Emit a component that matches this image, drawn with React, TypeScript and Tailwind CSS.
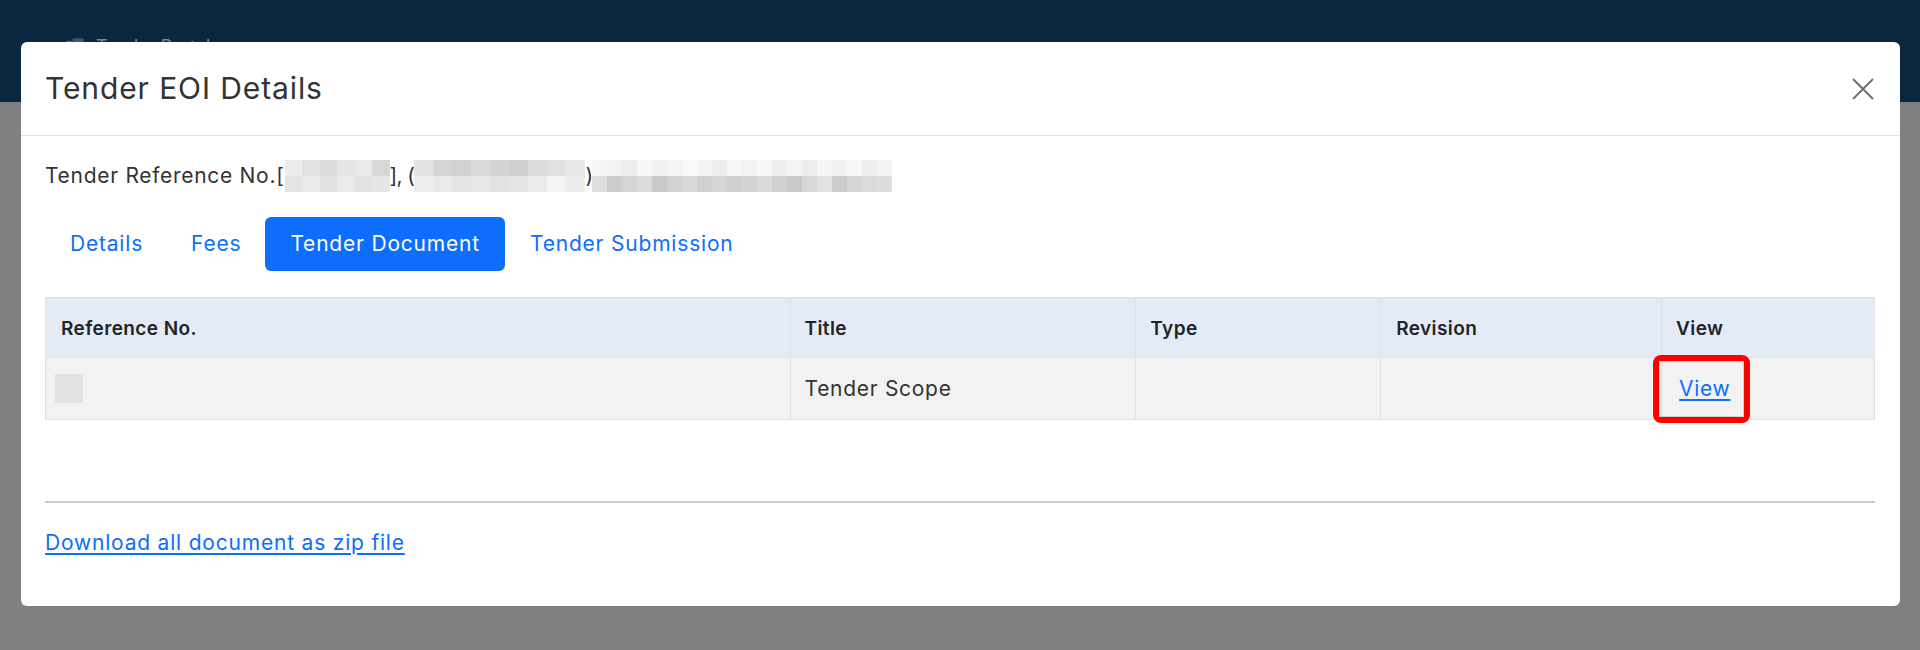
import React from "react";

const shades1 = [
  ["bg-[#ececec]", "bg-[#e2e2e2]", "bg-[#dcdcdc]", "bg-[#e6e6e6]", "bg-[#e9e9e9]", "bg-[#d7d7d7]"],
  ["bg-[#e4e4e4]", "bg-[#e9e9e9]", "bg-[#e1e1e1]", "bg-[#ebebeb]", "bg-[#e3e3e3]", "bg-[#e6e6e6]"],
];
const shades2 = [
  ["bg-[#e3e3e3]", "bg-[#d6d6d6]", "bg-[#d2d2d2]", "bg-[#dadada]", "bg-[#d4d4d4]", "bg-[#cfcfcf]", "bg-[#dddddd]", "bg-[#e0e0e0]", "bg-[#e8e8e8]"],
  ["bg-[#eeeeee]", "bg-[#e9e9e9]", "bg-[#e4e4e4]", "bg-[#e7e7e7]", "bg-[#e2e2e2]", "bg-[#e6e6e6]", "bg-[#ebebeb]", "bg-[#f4f4f4]", "bg-[#ececec]"],
];
const shades3 = [
  ["bg-[#f6f6f6]", "bg-[#f2f2f2]", "bg-[#eeeeee]", "bg-[#f7f7f7]", "bg-[#f1f1f1]", "bg-[#f5f5f5]", "bg-[#f9f9f9]", "bg-[#f3f3f3]", "bg-[#eeeeee]", "bg-[#f6f6f6]", "bg-[#f2f2f2]", "bg-[#f8f8f8]", "bg-[#efefef]", "bg-[#f4f4f4]", "bg-[#ededed]", "bg-[#f5f5f5]", "bg-[#f1f1f1]", "bg-[#f7f7f7]", "bg-[#eeeeee]", "bg-[#f3f3f3]"],
  ["bg-[#dedede]", "bg-[#cdcdcd]", "bg-[#d5d5d5]", "bg-[#dcdcdc]", "bg-[#c9c9c9]", "bg-[#d3d3d3]", "bg-[#d8d8d8]", "bg-[#d0d0d0]", "bg-[#d6d6d6]", "bg-[#cfcfcf]", "bg-[#d4d4d4]", "bg-[#dadada]", "bg-[#d1d1d1]", "bg-[#cbcbcb]", "bg-[#d7d7d7]", "bg-[#e2e2e2]", "bg-[#cccccc]", "bg-[#d5d5d5]", "bg-[#dbdbdb]", "bg-[#dddddd]"],
];

function Mosaic({ rows, tile }: { rows: string[][]; tile: string }) {
  return (
    <span className="inline-flex flex-col align-middle">
      {rows.map((r, i) => (
        <span key={i} className="flex">
          {r.map((c, j) => (
            <span key={j} className={`${c} ${tile}`} />
          ))}
        </span>
      ))}
    </span>
  );
}

export default function App() {
  return (
    <div className="relative h-[650px] w-[1920px] overflow-hidden bg-[#808080] font-['Inter',sans-serif]">
      <header className="flex h-[102px] items-start bg-[#0b2740] pl-[64px] pt-[33px] text-[18px] text-[#7d8894]">
        <div className="flex items-center gap-[8px]">
          <svg width="24" height="20" viewBox="0 0 24 20">
            <rect x="2" y="4" width="12" height="14" fill="#8c96a0" stroke="#2b3440" />
            <rect x="8" y="1" width="12" height="14" fill="#3c5a82" stroke="#1b2530" />
          </svg>
          <span>Tender Portal</span>
        </div>
      </header>

      <div className="absolute left-[21px] top-[42px] flex h-[564px] w-[1879px] flex-col rounded-[6px] bg-white">
        <div className="flex h-[94px] shrink-0 items-center justify-between border-b border-[#dee2e6] px-[24px]">
          <h5 className="text-[30px] font-normal tracking-[0.9px] text-[#333333]">Tender EOI Details</h5>
          <button className="mr-[1px] flex h-[24px] w-[24px] items-center justify-center">
            <svg width="22" height="22" viewBox="0 0 22 22">
              <path d="M1 1L21 21M21 1L1 21" stroke="#6b6b6b" strokeWidth="1.8" />
            </svg>
          </button>
        </div>

        <div className="flex flex-1 flex-col px-[24px] pt-[23px] tracking-[0.7px]">
          <div className="flex h-[34px] items-center text-[21px] leading-[30px] text-[#333333]">
            <span>Tender Reference No.[</span>
            <Mosaic rows={shades1} tile="h-[16px] w-[17.5px]" />
            <span className="tracking-[-0.6px]">], (</span>
            <Mosaic rows={shades2} tile="h-[16px] w-[19px]" />
            <span className="tracking-[-1px]">)</span>
            <Mosaic rows={shades3} tile="h-[16px] w-[15px]" />
          </div>

          <nav className="mt-[24px] flex h-[54px] items-stretch text-[21px] tracking-[0.8px]">
            <a className="flex items-center px-[25px] text-[#0d6efd]">Details</a>
            <a className="flex items-center pl-[23px] pr-[24px] text-[#0d6efd]">Fees</a>
            <a className="flex items-center rounded-[6px] bg-[#0d6efd] px-[25px] text-white">Tender Document</a>
            <a className="flex items-center px-[25px] text-[#0d6efd]">Tender Submission</a>
          </nav>

          <table className="mt-[26px] w-[1830px] border-collapse text-left text-[21px] text-[#212529]">
            <thead>
              <tr className="h-[60px] bg-[#e5ebf6] text-[19px] font-semibold tracking-[0.4px]">
                <th className="w-[745px] border border-[#dee2e6] px-[15px] pt-[3px] font-semibold">Reference No.</th>
                <th className="w-[346px] border border-[#dee2e6] px-[14px] pt-[3px] font-semibold">Title</th>
                <th className="w-[245px] border border-[#dee2e6] px-[14px] pt-[3px] font-semibold">Type</th>
                <th className="w-[281px] border border-[#dee2e6] px-[15px] pt-[3px] font-semibold">Revision</th>
                <th className="w-[213px] border border-[#dee2e6] px-[14px] pt-[3px] font-semibold">View</th>
              </tr>
            </thead>
            <tbody>
              <tr className="h-[62px] bg-[#f2f2f2]">
                <td className="border border-[#dee2e6] px-[9px]">
                  <div className="h-[29px] w-[28px] bg-[#e2e2e2]" />
                </td>
                <td className="border border-[#dee2e6] px-[14px] text-[#333333]">Tender Scope</td>
                <td className="border border-[#dee2e6]" />
                <td className="border border-[#dee2e6]" />
                <td className="relative border border-[#dee2e6] px-[17px]">
                  <div className="absolute left-[-9px] top-[-3px] h-[68px] w-[97px] rounded-[8px] border-[6px] border-[#ff0000]">
                    <div className="h-full w-full border border-[#d0d0d0]" />
                  </div>
                  <a className="relative text-[#0d6efd] underline underline-offset-[3px]">View</a>
                </td>
              </tr>
            </tbody>
          </table>

          <div className="mt-[81px] h-[2px] w-[1830px] bg-[#cccccc]" />

          <div className="mt-[24px]">
            <a className="text-[21px] tracking-[0.8px] text-[#0d6efd] underline underline-offset-[3px]">Download all document as zip file</a>
          </div>
        </div>
      </div>
    </div>
  );
}
